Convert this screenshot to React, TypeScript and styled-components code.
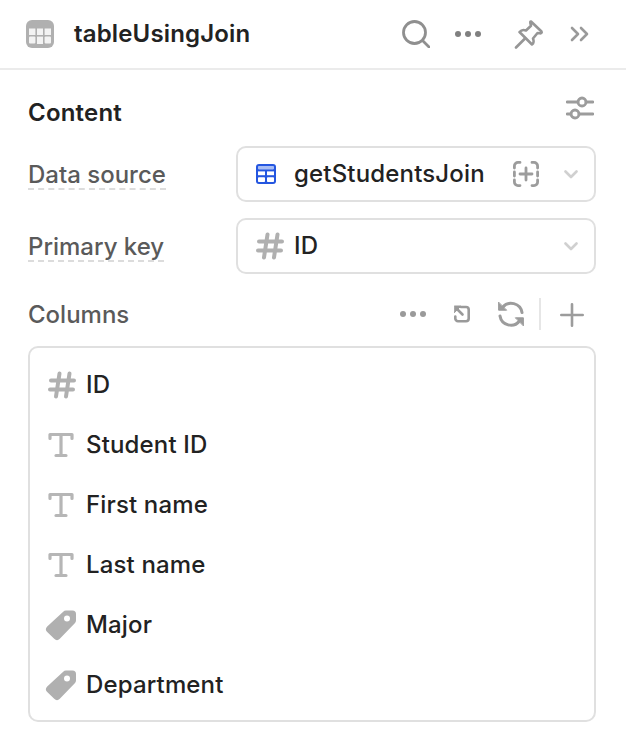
import React from "react";
import styled, { createGlobalStyle } from "styled-components";

const Global = createGlobalStyle`
  html, body { margin: 0; padding: 0; background: #fff; }
  body { font-family: Inter, "Liberation Sans", sans-serif; -webkit-font-smoothing: antialiased; }
`;

const Panel = styled.div`
  width: 626px;
  height: 738px;
  overflow: hidden;
  background: #fff;
  color: #1f1f1f;
`;

const Header = styled.header`
  height: 68px;
  box-sizing: content-box;
  border-bottom: 2px solid #ebebeb;
  display: flex;
  align-items: center;
  padding: 0 36px 0 26px;
`;

const Title = styled.h1`
  margin: 0 0 0 20px;
  font-size: 24px;
  line-height: 32px;
  font-weight: 600;
  letter-spacing: 0.15px;
  color: #222;
  flex: 1;
`;

const HeaderTools = styled.div`
  display: flex;
  align-items: center;
`;

const Body = styled.div`
  padding: 0 30px 0 28px;
  display: flex;
  flex-direction: column;
`;

const SectionHead = styled.div`
  height: 76px;
  display: flex;
  align-items: center;
  justify-content: space-between;
  padding-right: 2px;
`;

const SectionTitle = styled.h2`
  margin: 10px 0 0;
  font-size: 24px;
  font-weight: 600;
  letter-spacing: 0.2px;
  line-height: 32px;
  color: #222;
`;

const Field = styled.div`
  display: flex;
  align-items: center;
  height: 56px;
  margin-bottom: 16px;
`;

const FieldLabel = styled.span`
  width: 208px;
  flex: none;
  font-size: 24px;
`;

const Dashed = styled.span`
  display: inline-block;
  color: #5a5a5a;
  font-weight: 500;
  padding-top: 2px;
  line-height: 27px;
  border-bottom: 2px dashed #dcdcdc;
`;

const Select = styled.div`
  flex: 1;
  height: 56px;
  box-sizing: border-box;
  border: 2px solid #e0e0e0;
  border-radius: 10px;
  display: flex;
  align-items: center;
  padding: 0 16px 0 18px;
`;

const SelectIcon = styled.span`
  width: 28px;
  flex: none;
  display: flex;
  align-items: center;
`;

const SelectValue = styled.span`
  flex: 1;
  font-size: 24px;
  font-weight: 500;
  letter-spacing: 0.17px;
  line-height: 32px;
  margin-left: 10px;
  color: #222;
`;

const SelectAction = styled.span`
  display: flex;
  margin-right: 25px;
`;

const ColumnsHead = styled.div`
  display: flex;
  align-items: center;
  justify-content: space-between;
  height: 40px;
  margin-top: 5px;
  margin-bottom: 11px;
`;

const ColumnsLabel = styled.span`
  font-size: 24px;
  font-weight: 500;
  line-height: 32px;
  color: #5a5a5a;
`;

const ColumnTools = styled.div`
  display: flex;
  align-items: center;
  padding-right: 12px;
`;

const ToolGroup = styled.div`
  display: flex;
  align-items: center;
  margin-bottom: 2px;
`;

const ToolDivider = styled.span`
  width: 2px;
  height: 32px;
  background: #e6e6e6;
  margin: 0 19px 0 15px;
`;

const List = styled.div`
  height: 376px;
  box-sizing: border-box;
  border: 2px solid #e0e0e0;
  border-radius: 10px;
  padding: 7px 16px 5px 18px;
`;

const Row = styled.div`
  height: 60px;
  display: flex;
  align-items: center;
`;

const RowIcon = styled.span`
  width: 38px;
  flex: none;
  display: flex;
  align-items: center;
`;

const RowText = styled.span`
  font-size: 24px;
  font-weight: 500;
  letter-spacing: 0.15px;
  line-height: 32px;
  color: #222;
`;

const Svg = styled.svg<{ $ml?: number }>`
  display: block;
  flex: none;
  margin-left: ${(p) => p.$ml ?? 0}px;
`;

const TableGrey = () => (
  <Svg width="28" height="28" viewBox="0 0 28 28">
    <rect x="0" y="0" width="28" height="28" rx="6" fill="#b0b0b0" />
    <g fill="#fff" opacity="0.85">
      <rect x="3" y="8.5" width="6.4" height="6.5" />
      <rect x="11" y="8.5" width="6" height="6.5" />
      <rect x="18.6" y="8.5" width="6.4" height="6.5" />
      <rect x="3" y="16.6" width="6.4" height="7" rx="1" />
      <rect x="11" y="16.6" width="6" height="7.4" />
      <rect x="18.6" y="16.6" width="6.4" height="7" rx="1" />
    </g>
  </Svg>
);

const Search = () => (
  <Svg width="28" height="28" viewBox="0 0 28 28" fill="none" stroke="#8f8f8f" strokeWidth="2.8" strokeLinecap="round">
    <circle cx="12.5" cy="12.5" r="11" />
    <path d="M21 21l6 6" />
  </Svg>
);

const Dots = ({ ml, color = "#808080" }: { ml?: number; color?: string }) => (
  <Svg $ml={ml} width="28" height="8" viewBox="0 0 28 8" fill={color}>
    <circle cx="4" cy="4" r="3" />
    <circle cx="14" cy="4" r="3" />
    <circle cx="24" cy="4" r="3" />
  </Svg>
);

const Pin = () => (
  <Svg $ml={32} width="30" height="30" viewBox="0 0 30 30" fill="none" stroke="#969696" strokeWidth="2.6" strokeLinejoin="round" strokeLinecap="round">
    <path d="M17 2.5 L27.5 12.5 C28 13.5 27.5 14.5 26 14.3 L23.5 14 L19 19.5 C20 22 19.5 24.5 18 25.5 L5.5 13 C7 11.2 9.5 10.5 12 11.5 L17 6.8 L16.4 4.2 C16.2 2.8 16.4 2.4 17 2.5 Z" />
    <path d="M11 19.5 L2 28.5" />
  </Svg>
);

const Chevrons = () => (
  <Svg $ml={26} width="20" height="16" viewBox="0 0 20 16" fill="none" stroke="#9a9a9a" strokeWidth="2.6" strokeLinecap="round" strokeLinejoin="round">
    <path d="M2 2l6 6-6 6" />
    <path d="M11 2l6 6-6 6" />
  </Svg>
);

const Sliders = () => (
  <Svg width="28" height="24" viewBox="0 0 28 24" fill="none" stroke="#9c9c9c" strokeWidth="2.8" strokeLinecap="round">
    <path d="M1 6h11M20 6h7M1 18h4M13 18h14" />
    <circle cx="16" cy="6" r="4" />
    <circle cx="9" cy="18" r="4" />
  </Svg>
);

const TableBlue = () => (
  <Svg width="20" height="20" viewBox="0 0 20 20">
    <rect width="20" height="20" rx="3" fill="#2456e0" />
    <rect x="2" y="2" width="16" height="3.4" rx="0.8" fill="#a8bdf4" />
    <g fill="#fff">
      <rect x="2" y="7.4" width="7" height="3.8" />
      <rect x="11" y="7.4" width="7" height="3.8" />
      <rect x="2" y="13.2" width="7" height="4.8" rx="0.8" />
      <rect x="11" y="13.2" width="7" height="4.8" rx="0.8" />
    </g>
  </Svg>
);

const ScanPlus = () => (
  <Svg width="26" height="26" viewBox="0 0 26 26" fill="none" stroke="#9c9c9c" strokeWidth="2.8" strokeLinecap="round">
    <path d="M7 1.4H5A3.6 3.6 0 0 0 1.4 5v2M19 1.4h2A3.6 3.6 0 0 1 24.6 5v2M7 24.6H5A3.6 3.6 0 0 1 1.4 21v-2M19 24.6h2a3.6 3.6 0 0 0 3.6-3.6v-2" />
    <path d="M13 7v12M7 13h12" />
    <path d="M1.4 11v4M24.6 11v4" />
  </Svg>
);

const Chevron = () => (
  <Svg width="14" height="9" viewBox="0 0 14 9" fill="none" stroke="#d0d0d0" strokeWidth="2.6" strokeLinecap="round" strokeLinejoin="round">
    <path d="M1.5 1.5L7 7l5.5-5.5" />
  </Svg>
);

const Hash = () => (
  <Svg width="28" height="28" viewBox="0 0 28 28" fill="none" stroke="#b0b0b0" strokeWidth="4" strokeLinecap="round">
    <path d="M11.5 2.5L8 25.5M21.5 2.5L18 25.5M3 9.5h23M2 18.5h23" />
  </Svg>
);

const TypeIcon = () => (
  <Svg width="26" height="26" viewBox="0 0 26 26" fill="none" stroke="#b6b6b6" strokeWidth="3.2" strokeLinecap="round" strokeLinejoin="round">
    <path d="M2 6.5V2.5h22V6.5M13 2.5v21M8 23.5h10" />
  </Svg>
);

const Tag = () => (
  <Svg $ml={-3} width="32" height="32" viewBox="0 0 32 32">
    <path
      fill="#b0b0b0"
      fillRule="evenodd"
      d="M21 1.5h6.5A3.5 3.5 0 0 1 31 5v6.5a4 4 0 0 1-1.2 2.8L14.8 29.8a4 4 0 0 1-5.6 0L2.2 23a4 4 0 0 1 0-5.6L18.2 2.7A4 4 0 0 1 21 1.5Zm1 5a3 3 0 1 0 0 6 3 3 0 0 0 0-6Z"
    />
  </Svg>
);

const SmallCorner = () => (
  <Svg $ml={27} width="16" height="18" viewBox="0 0 16 18" fill="none" stroke="#9a9a9a" strokeWidth="2.6" strokeLinecap="round" strokeLinejoin="round">
    <path d="M7 2H12A2.7 2.7 0 0 1 14.7 4.7V13.5A2.7 2.7 0 0 1 12 16.2H4A2.7 2.7 0 0 1 1.3 13.5V11.5" />
    <path d="M2 3l6.5 6.5" />
    <path d="M0.6 1H7L0.6 7.5Z" fill="#9a9a9a" strokeWidth="1" />
  </Svg>
);

const Refresh = () => (
  <Svg $ml={28} width="26" height="26" viewBox="0 0 26 26" fill="none" stroke="#9c9c9c" strokeWidth="3" strokeLinecap="round" strokeLinejoin="round">
    <path d="M24 11.5A11 11 0 0 0 4.5 6.5" />
    <path d="M2 15A11 11 0 0 0 21.5 20" />
    <path d="M0.6 1.5V9.2H8.3Z" fill="#9c9c9c" strokeWidth="1" />
    <path d="M25.4 24.5V16.8H17.7Z" fill="#9c9c9c" strokeWidth="1" />
  </Svg>
);

const Plus = () => (
  <Svg width="24" height="24" viewBox="0 0 24 24" fill="none" stroke="#9c9c9c" strokeWidth="2.6" strokeLinecap="round">
    <path d="M12 1.3v21.4M1.3 12h21.4" />
  </Svg>
);

const columns: { name: string; icon: React.ReactNode }[] = [
  { name: "ID", icon: <Hash /> },
  { name: "Student ID", icon: <TypeIcon /> },
  { name: "First name", icon: <TypeIcon /> },
  { name: "Last name", icon: <TypeIcon /> },
  { name: "Major", icon: <Tag /> },
  { name: "Department", icon: <Tag /> },
];

export default function App() {
  return (
    <Panel>
      <Global />
      <Header>
        <TableGrey />
        <Title>tableUsingJoin</Title>
        <HeaderTools>
          <Search />
          <Dots ml={24} />
          <Pin />
          <Chevrons />
        </HeaderTools>
      </Header>
      <Body>
        <SectionHead>
          <SectionTitle>Content</SectionTitle>
          <Sliders />
        </SectionHead>
        <Field>
          <FieldLabel><Dashed>Data source</Dashed></FieldLabel>
          <Select>
            <SelectIcon><TableBlue /></SelectIcon>
            <SelectValue>getStudentsJoin</SelectValue>
            <SelectAction><ScanPlus /></SelectAction>
            <Chevron />
          </Select>
        </Field>
        <Field>
          <FieldLabel><Dashed>Primary key</Dashed></FieldLabel>
          <Select>
            <SelectIcon><Hash /></SelectIcon>
            <SelectValue>ID</SelectValue>
            <Chevron />
          </Select>
        </Field>
        <ColumnsHead>
          <ColumnsLabel>Columns</ColumnsLabel>
          <ColumnTools>
            <ToolGroup>
              <Dots color="#9a9a9a" />
              <SmallCorner />
              <Refresh />
              <ToolDivider />
            </ToolGroup>
            <Plus />
          </ColumnTools>
        </ColumnsHead>
        <List>
          {columns.map((c) => (
            <Row key={c.name}>
              <RowIcon>{c.icon}</RowIcon>
              <RowText>{c.name}</RowText>
            </Row>
          ))}
        </List>
      </Body>
    </Panel>
  );
}
